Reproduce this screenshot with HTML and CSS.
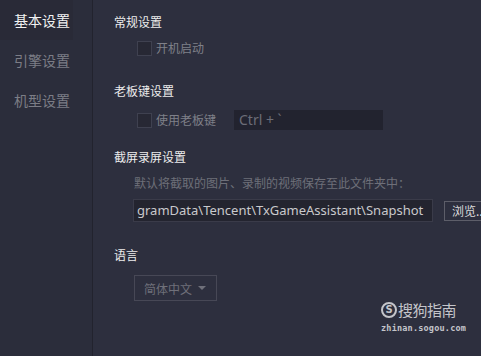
FILE: index.html
```html
<!DOCTYPE html>
<html lang="zh">
<head>
<meta charset="utf-8">
<link rel="stylesheet" href="styles.css">
</head>
<body>
<div class="app">
  <nav class="sidebar">
    <div class="nav-item active">基本设置</div>
    <div class="nav-item">引擎设置</div>
    <div class="nav-item">机型设置</div>
  </nav>
  <main class="content">
    <section class="sec sec-general">
      <h2 class="title">常规设置</h2>
      <label class="check-row"><span class="box"></span><span class="label">开机启动</span></label>
    </section>
    <section class="sec sec-boss">
      <h2 class="title">老板键设置</h2>
      <div class="check-row">
        <span class="box"></span><span class="label label-w">使用老板键</span>
        <div class="hotkey">Ctrl + `</div>
      </div>
    </section>
    <section class="sec sec-shot">
      <h2 class="title">截屏录屏设置</h2>
      <p class="desc">默认将截取的图片、录制的视频保存至此文件夹中：</p>
      <div class="path-row">
        <div class="path">gramData\Tencent\TxGameAssistant\Snapshot</div>
        <div class="browse">浏览...</div>
      </div>
    </section>
    <section class="sec sec-lang">
      <h2 class="title">语言</h2>
      <div class="select"><span>简体中文</span><span class="caret"></span></div>
    </section>
  </main>
</div>
<div class="watermark">
  <div class="wm-top"><span class="wm-s">S</span><span class="wm-name">搜狗指南</span></div>
  <div class="wm-url">zhinan.sogou.com</div>
</div>
</body>
</html>
```
FILE: styles.css
```css
* { box-sizing: border-box; margin: 0; padding: 0; }
html, body { width: 481px; height: 356px; overflow: hidden; }
body {
  background: #2d2f3e;
  font-family: "Noto Sans CJK SC", "Noto Sans", sans-serif;
  color: #e6e6e6;
  position: relative;
}
.app { display: flex; height: 356px; }
.sidebar {
  width: 93px;
  background: #2b2d3b;
  border-right: 1px solid #22232e;
  flex: none;
}
.nav-item {
  height: 40px;
  line-height: 40px;
  font-size: 14px;
  padding-left: 14px;
  color: #7c7d86;
}
.nav-item.active { color: #f2f2f2; background: #292a37; width: 73px; }
.content { flex: 1; padding-left: 21px; }
.title {
  font-size: 12px;
  font-weight: normal;
  color: #ececec;
  line-height: 16px;
}
.sec-general { padding-top: 14px; }
.check-row {
  display: flex;
  align-items: center;
  margin-left: 23px;
  height: 16px;
}
.sec-general .check-row { margin-top: 10px; }
.box {
  width: 15px; height: 15px;
  border: 1px solid #3f4150;
  background: #272834;
  flex: none;
}
.label { font-size: 12px; color: #7f8089; margin-left: 4px; line-height: 16px; }
.label-w { width: 78px; }
.sec-boss { margin-top: 27px; }
.sec-boss .check-row { margin-top: 11px; height: 20px; }
.hotkey {
  width: 149px; height: 20px;
  background: #22232f;
  color: #6c6d77;
  font-family: "Noto Sans", sans-serif;
  font-size: 14px;
  line-height: 20px;
  padding-left: 5px;
}
.sec-shot { margin-top: 19px; }
.desc { font-size: 12px; color: #6e6f79; line-height: 16px; margin-top: 10px; margin-left: 20px; }
.path-row { display: flex; align-items: center; margin-top: 8px; margin-left: 19px; }
.path {
  width: 300px; height: 23px;
  background: #23242f;
  border: 1px solid #3a3b49;
  color: #c9c9cc;
  font-family: "Noto Sans", sans-serif;
  font-size: 13px;
  line-height: 21px;
  padding-left: 3px;
  white-space: nowrap;
  overflow: hidden;
}
.browse {
  margin-left: 11px;
  height: 20px;
  border: 1px solid #5d5e69;
  color: #dcdcdc;
  font-size: 12px;
  line-height: 18px;
  padding-left: 7px;
  width: 40px;
  white-space: nowrap;
  overflow: hidden;
  flex: none;
}
.sec-lang { margin-top: 25px; }
.select {
  margin-top: 12px;
  margin-left: 20px;
  width: 83px; height: 26px;
  border: 1px solid #474856;
  display: flex; align-items: center;
  padding-left: 9px;
  font-size: 12px;
  color: #6f707a;
}
.caret {
  margin-left: 6px;
  width: 0; height: 0;
  border-left: 4px solid transparent;
  border-right: 4px solid transparent;
  border-top: 4px solid #6f707a;
}
.watermark {
  position: absolute;
  left: 381px; top: 300px;
  color: #c4c5ca;
}
.wm-top { display: flex; align-items: center; }
.wm-s {
  width: 16px; height: 16px;
  border: 2px solid #c4c5ca;
  border-radius: 50%;
  font-family: "DejaVu Sans", sans-serif;
  font-weight: bold;
  font-size: 10px;
  line-height: 12px;
  text-align: center;
}
.wm-name { font-size: 15px; margin-left: 1px; line-height: 20px; letter-spacing: -0.5px; }
.wm-url {
  font-family: "DejaVu Sans Mono", monospace;
  font-size: 8.5px;
  font-weight: bold;
  margin-top: 3px;
  letter-spacing: 0.2px;
}
```
